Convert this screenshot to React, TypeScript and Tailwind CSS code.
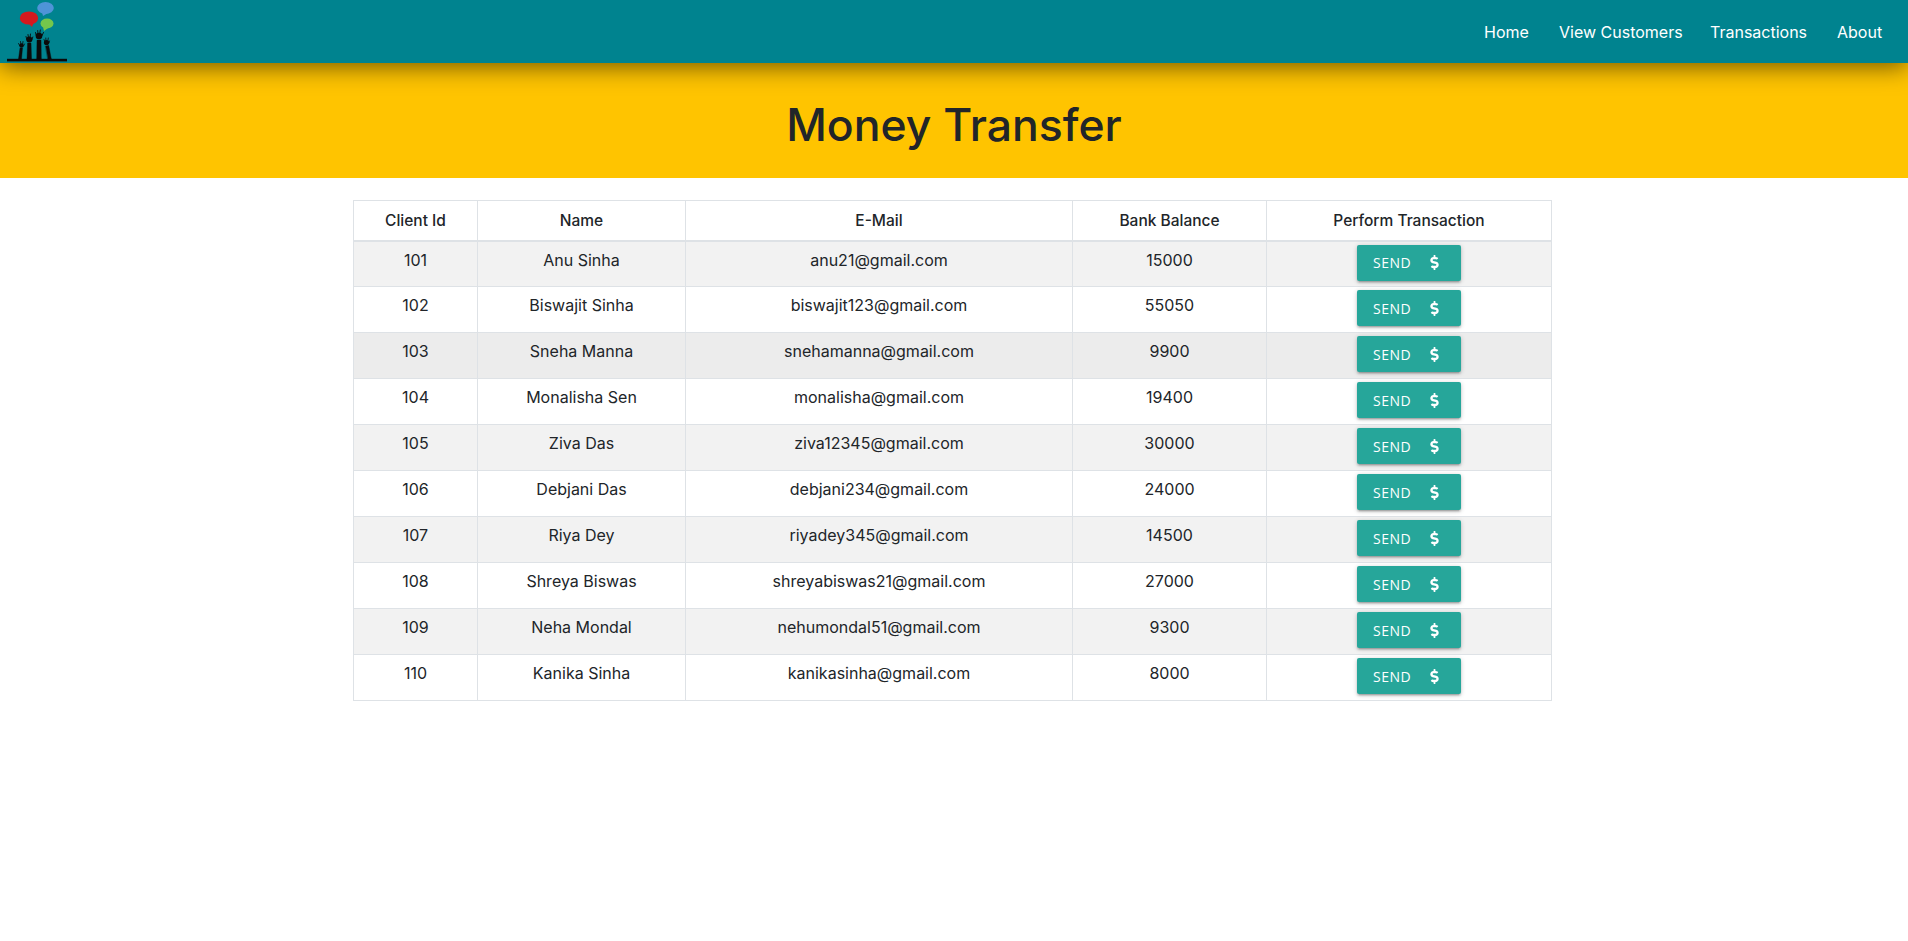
import { FaDollarSign } from "react-icons/fa";

const rows = [
  ["101", "Anu Sinha", "anu21@gmail.com", "15000"],
  ["102", "Biswajit Sinha", "biswajit123@gmail.com", "55050"],
  ["103", "Sneha Manna", "snehamanna@gmail.com", "9900"],
  ["104", "Monalisha Sen", "monalisha@gmail.com", "19400"],
  ["105", "Ziva Das", "ziva12345@gmail.com", "30000"],
  ["106", "Debjani Das", "debjani234@gmail.com", "24000"],
  ["107", "Riya Dey", "riyadey345@gmail.com", "14500"],
  ["108", "Shreya Biswas", "shreyabiswas21@gmail.com", "27000"],
  ["109", "Neha Mondal", "nehumondal51@gmail.com", "9300"],
  ["110", "Kanika Sinha", "kanikasinha@gmail.com", "8000"],
];

const headers = ["Client Id", "Name", "E-Mail", "Bank Balance", "Perform Transaction"];

function Logo() {
  return (
    <svg width="70" height="63" viewBox="0 0 70 63" className="block">
      <ellipse cx="45.5" cy="8" rx="8.3" ry="6" fill="#4f94d8" />
      <path d="M42 12 L43 16 L48 13 Z" fill="#4f94d8" />
      <ellipse cx="29" cy="18" rx="9.2" ry="6.6" fill="#d3191f" />
      <path d="M28 23 L32 27 L34 22 Z" fill="#d3191f" />
      <ellipse cx="47" cy="23.5" rx="6.5" ry="5" fill="#74c74c" />
      <path d="M43 27 L44 31 L48 28 Z" fill="#74c74c" />
      <rect x="7" y="58.8" width="60" height="2.6" fill="#0a0a0a" />
      <g fill="#0a0a0a" stroke="#0a0a0a" strokeLinecap="round">
        <path d="M18.5 59 L20 48 L22.5 48 L21.5 59 Z" strokeWidth="0.4" />
        <circle cx="21.5" cy="45.5" r="2.2" stroke="none" />
        <path d="M20 46 L18.5 43.5 M21 45 L20.5 41.5 M22.5 45 L23 41.5 M23.5 46 L24.5 44" strokeWidth="0.8" fill="none" />
        <path d="M27 59 L27.6 43 L31 43 L31.5 59 Z" strokeWidth="0.4" />
        <circle cx="29.3" cy="39.5" r="3" stroke="none" />
        <path d="M27 40 L26 36.5 M28.5 38 L28 34.5 M30 38 L30.5 34 M31.8 40 L32.8 37" strokeWidth="0.9" fill="none" />
        <path d="M36.7 59 L37 40 L41 40 L41.3 59 Z" strokeWidth="0.4" />
        <circle cx="39" cy="36" r="3.3" stroke="none" />
        <path d="M36.5 36.5 L35.5 32.5 M38 34 L37.7 30.5 M39.7 34 L40.3 30 M41.8 36 L43.5 32.5" strokeWidth="0.9" fill="none" />
        <path d="M45.7 46 L48.7 45.5 L51.3 59 L48 59 Z" strokeWidth="0.4" />
        <circle cx="46.5" cy="42.5" r="2.6" stroke="none" />
        <path d="M45 42 L44 39.5 M46 41 L45.8 38 M47.8 41 L48.3 38 M49 43 L49.5 41" strokeWidth="0.8" fill="none" />
      </g>
    </svg>
  );
}

export default function App() {
  return (
    <div className="min-h-[941px] bg-white font-['Inter','Liberation_Sans',sans-serif] text-[#212529]">
      <nav className="relative z-10 flex h-[63px] items-center justify-between bg-[#00838f] pr-[26px] shadow-[0_4px_25px_rgba(0,0,0,0.55)]">
        <Logo />
        <div className="flex gap-[30px] text-[16px] text-white">
          <a className="w-[45px] whitespace-nowrap text-center">Home</a>
          <a className="w-[121px] whitespace-nowrap text-center">View Customers</a>
          <a className="w-[97px] whitespace-nowrap text-center">Transactions</a>
          <a className="w-[45px] whitespace-nowrap text-center">About</a>
        </div>
      </nav>
      <header className="flex h-[115px] items-center justify-center bg-[#ffc400] pt-[10px]">
        <h1 className="text-[44.5px] font-medium leading-[1.2]">Money Transfer</h1>
      </header>
      <main className="pl-[353px] pt-[22px]">
        <table className="w-[1198px] table-fixed border-collapse text-center text-[16px]">
          <colgroup>
            <col className="w-[124px]" />
            <col className="w-[208px]" />
            <col className="w-[387px]" />
            <col className="w-[194px]" />
            <col className="w-[285px]" />
          </colgroup>
          <thead>
            <tr className="h-[40px]">
              {headers.map((h) => (
                <th key={h} className="border border-b-2 border-[#dee2e6] text-[15.5px] font-medium">
                  {h}
                </th>
              ))}
            </tr>
          </thead>
          <tbody>
            {rows.map((r, i) => (
              <tr key={r[0]} className={`h-[46px] ${i === 2 ? "bg-[#ececec]" : i % 2 === 0 ? "bg-[#f2f2f2]" : "bg-white"}`}>
                {r.map((c) => (
                  <td key={c} className="border border-[#dee2e6] pt-[6px] align-top leading-[24px]">
                    {c}
                  </td>
                ))}
                <td className="border border-[#dee2e6] pt-[3px] align-top">
                  <button className="inline-flex h-[36px] w-[104px] items-center rounded-[2px] bg-[#26a69a] pl-4 font-['Open_Sans',sans-serif] text-[14px] tracking-[0.5px] text-white shadow-[0_2px_2px_rgba(0,0,0,0.14),0_3px_1px_-2px_rgba(0,0,0,0.12),0_1px_5px_rgba(0,0,0,0.2)]">
                    SEND
                    <FaDollarSign className="ml-[16px] text-[15px]" />
                  </button>
                </td>
              </tr>
            ))}
          </tbody>
        </table>
      </main>
    </div>
  );
}
